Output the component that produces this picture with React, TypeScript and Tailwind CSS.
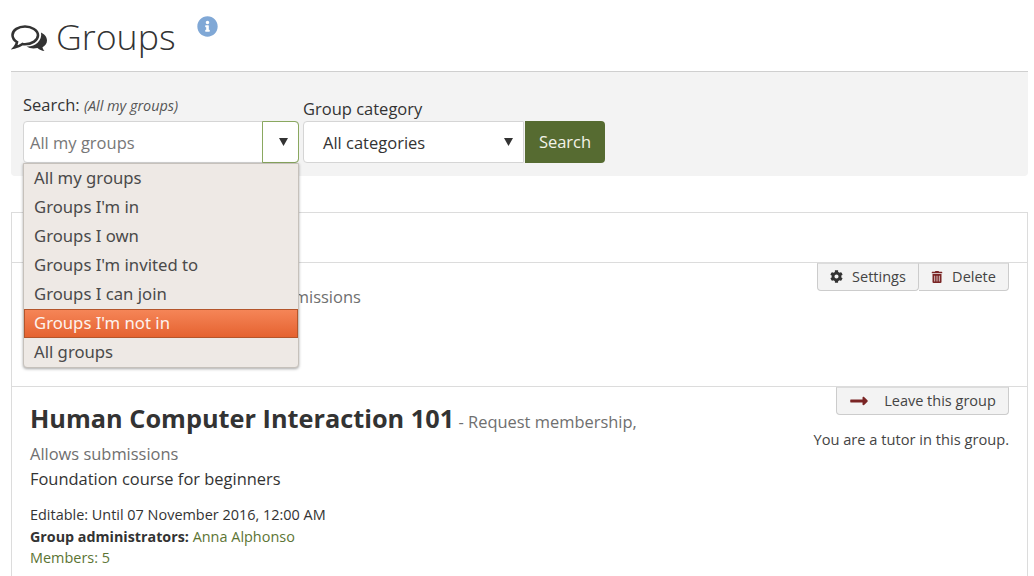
import { FaCog, FaInfoCircle, FaLongArrowAltRight, FaTrashAlt } from "react-icons/fa";

const searchOptions = ["All my groups", "Groups I'm in", "Groups I own", "Groups I'm invited to", "Groups I can join", "Groups I'm not in", "All groups"];

function ChatIcon() {
    return (
        <svg viewBox="0 0 37 30" className="w-[37px] h-[30px]">
            <path d="M30 9.500c3.500 1.500 6 4.500 6 8 0 3-2 5.500-4.500 6.800.2 1.400 1 2.800 2 3.700-2.800-.3-5-1.300-7-3-4 .8-8 .5-11-1.500 9 .3 16-6 14.500-14z" fill="#333" />
            <path d="M14 3.500C7.500 3.500 1.500 7 1.500 12c0 3 2 5.500 4.500 7-.2 2-1 4-2.500 5.500 3-.5 6-2 8-3.500 1 .2 1.700.2 2.500.2 7 0 13-4 13-9S20.500 3.500 14 3.500z" fill="none" stroke="#333" strokeWidth="2.600" />
        </svg>
    );
}

function SelectArrow() {
    return (
        <svg viewBox="0 0 9 8" className="w-[9px] h-[8px]">
            <polygon points="0,0 9,0 4.500,8" fill="#333" />
        </svg>
    );
}

export default function App() {
    return (
        <div className="w-[1034px] h-[576px] overflow-hidden bg-white pl-[11px] pr-[6px] font-['Open_Sans',sans-serif] text-[#333]">
            <div className="h-[72px] border-b border-[#cfcfcf] flex items-start relative">
                <div className="mt-[23px]"><ChatIcon /></div>
                <h1 className="ml-[8px] mt-[11px] text-[35.700px] leading-[50px] font-light">Groups</h1>
                <FaInfoCircle className="ml-[21px] mt-[16px] text-[#80a8d6] text-[21px]" />
            </div>

            <div className="h-[104px] bg-[#f3f3f3] rounded-b pl-3 flex items-start pt-[21px] relative">
                <div className="w-[276px] mr-[4px]">
                    <div className="h-[28px] text-[16.500px] leading-[24px]">
                        Search: <em className="text-[14.400px] text-[#555]">(All my groups)</em>
                    </div>
                    <div className="h-[42px] flex bg-white border border-[#d5d5d5] rounded">
                        <div className="flex-1 pl-[6px] leading-[42px] text-[16.500px] text-[#777]">All my groups</div>
                        <div className="w-[37px] -my-px -mr-px pl-[5px] border border-[#8aa860] rounded-r flex items-center justify-center"><SelectArrow /></div>
                    </div>
                </div>
                <div className="w-[221px] mt-[4px]">
                    <div className="h-[24px] text-[16.500px] leading-[24px]">Group category</div>
                    <div className="h-[42px] flex items-center justify-between bg-white border border-[#d5d5d5] rounded-l pl-[19px] pr-[10px] text-[16.500px]">
                        <span className="pt-[2px]">All categories</span>
                        <SelectArrow />
                    </div>
                </div>
                <button className="mt-[28px] ml-px h-[42px] w-[80px] bg-[#566b31] text-[#f3f3e8] rounded-r text-[16.500px]">Search</button>
            </div>

            {/* open select list, sits over the results panel */}
            <ul className="absolute left-[23px] top-[163px] w-[276px] h-[205px] z-10 bg-[#eee9e5] border border-[#c6c1bb] rounded-b-sm shadow-[0_1px_3px_rgba(0,0,0,0.35)] font-['Noto_Sans',sans-serif] text-[16.700px] text-[#4a4a4a]">
                {searchOptions.map((option) => (
                    <li
                        key={option}
                        className={option === "Groups I'm not in"
                            ? "h-[29px] pl-[9px] leading-[26px] border border-[#b4552b] bg-gradient-to-b from-[#f58557] to-[#e5622f] text-[#fdf3ee]"
                            : "h-[29px] pl-[10px] leading-[28px]"}
                    >
                        {option}
                    </li>
                ))}
            </ul>

            <div className="mt-[36px] border-x border-t border-[#dcdcdc] h-[400px]">
                <div className="h-[50px] border-b border-[#dcdcdc]"></div>

                <div className="h-[124px] border-b border-[#dcdcdc] relative">
                    <div className="pl-[200px] pt-[22px] text-[16.500px] leading-[24px] text-[#6f6f6f]">Allows submissions</div>
                    <div className="absolute top-0 right-[18px] flex text-[14.500px] text-[#444]">
                        <button className="h-[28px] w-[102px] pb-px flex items-center justify-center gap-[9px] bg-[#f3f3f3] border border-[#cccccc] border-t-[#dcdcdc] rounded-b">
                            <FaCog className="text-[#333] text-[13px]" /> Settings
                        </button>
                        <button className="h-[28px] w-[90px] pb-px flex items-center justify-center gap-[9px] bg-[#f3f3f3] border border-l-0 border-[#cccccc] border-t-[#dcdcdc] rounded-br">
                            <FaTrashAlt className="text-[#7a2525] text-[12px]" /> Delete
                        </button>
                    </div>
                </div>

                <div className="relative pl-[18px]">
                    <div className="absolute top-0 right-[18px] flex flex-col items-end">
                        <button className="h-[28px] w-[173px] pb-px flex items-center justify-center gap-[15px] bg-[#f3f3f3] border border-[#cccccc] border-t-[#dcdcdc] rounded-b text-[14.500px] text-[#444]">
                            <FaLongArrowAltRight className="text-[#7a2525] text-[20px]" /> Leave this group
                        </button>
                        <p className="mt-[12px] text-[14.650px] leading-[24px] text-[#444]">You are a tutor in this group.</p>
                    </div>
                    <div className="w-[620px] pt-[15px] text-[16.450px] leading-[32px] text-[#6f6f6f]">
                        <span className="text-[25.300px] font-bold text-[#333]">Human Computer Interaction 101</span> - Request membership, Allows submissions
                    </div>
                    <p className="text-[16.450px] leading-[24px] text-[#333] mt-[-3px]">Foundation course for beginners</p>
                    <div className="mt-[13px] text-[14.450px] leading-[21.500px]">
                        <div>Editable: Until 07 November 2016, 12:00 AM</div>
                        <div><strong className="text-[14.300px]">Group administrators:</strong> <span className="text-[#5c7434]">Anna Alphonso</span></div>
                        <div className="text-[#5c7434]">Members: 5</div>
                    </div>
                </div>
            </div>
        </div>
    );
}
